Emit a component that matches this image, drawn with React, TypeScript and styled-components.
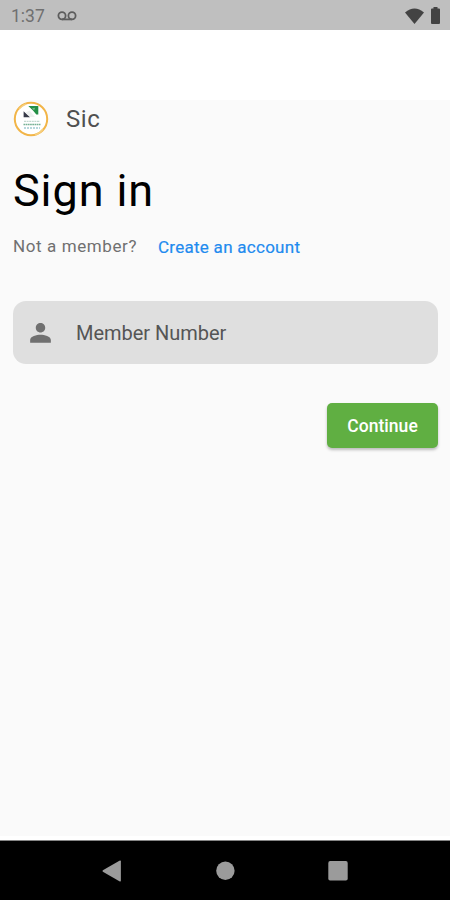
import React from "react";
import styled, { createGlobalStyle } from "styled-components";

const GlobalStyle = createGlobalStyle`
  * { box-sizing: border-box; }
  body { margin: 0; background: #fff; font-family: Roboto, sans-serif; }
`;

const Screen = styled.div`
  display: flex;
  flex-direction: column;
  width: 450px;
  height: 900px;
  background: #fff;
  overflow: hidden;
`;

const StatusBar = styled.header`
  display: flex;
  align-items: center;
  height: 30px;
  padding: 1px 10px 0 11px;
  background: #bfbfbf;
  color: #707070;
`;

const Clock = styled.span`
  width: 46px;
  padding-top: 1px;
  font-size: 17.5px;
  line-height: 28px;
`;

const StatusIcons = styled.div`
  display: flex;
  align-items: center;
  gap: 7px;
  margin-left: auto;
`;

const Page = styled.main`
  display: flex;
  flex-direction: column;
  height: 736px;
  margin-top: 70px;
  padding: 0 12px 0 13px;
  background: #fafafa;
`;

const Brand = styled.div`
  display: flex;
  align-items: center;
  gap: 17px;
  height: 38px;
`;

const BrandName = styled.span`
  font-size: 24px;
  line-height: 28px;
  letter-spacing: 0.6px;
  color: #505050;
`;

const Title = styled.h1`
  margin: 24px 0 0;
  font-size: 45px;
  line-height: 58px;
  font-weight: 400;
  letter-spacing: 0.9px;
  color: #000;
`;

const Prompt = styled.div`
  display: flex;
  gap: 21px;
  margin-top: 16px;
  font-size: 17px;
  line-height: 21px;
`;

const PromptText = styled.span`
  width: 124px;
  letter-spacing: 0.6px;
  white-space: nowrap;
  color: #707070;
`;

const PromptLink = styled.a`
  padding-top: 1px;
  letter-spacing: 0.27px;
  color: #1f8bef;
  -webkit-text-stroke: 0.2px #1f8bef;
`;

const Field = styled.label`
  display: flex;
  align-items: center;
  gap: 22px;
  height: 63px;
  margin-top: 43px;
  padding: 0 14px;
  border-radius: 13px;
  background: #dfdfdf;
`;

const FieldLabel = styled.span`
  font-size: 20px;
  line-height: 24px;
  letter-spacing: -0.02px;
  color: #555;
`;

const ContinueButton = styled.button`
  align-self: flex-end;
  width: 111px;
  height: 45px;
  margin-top: 39px;
  padding: 0;
  border: 0;
  border-radius: 5px;
  background: #60af42;
  box-shadow: 0 2px 3px rgba(0, 0, 0, 0.25);
  color: #fff;
  font: 500 17.5px/47px Roboto, sans-serif;
  letter-spacing: 0.05px;
`;

const NavBar = styled.nav`
  display: grid;
  grid-template-columns: repeat(3, 113px);
  justify-content: center;
  justify-items: center;
  align-items: center;
  height: 60px;
  margin-top: auto;
  border-top: 1px solid #858585;
  background: #000;
`;

const Voicemail = () => (
  <svg width="20" height="12" viewBox="0 0 20 12" fill="none" stroke="#5d5d5d" strokeWidth="1.8">
    <circle cx="5" cy="5.8" r="3.6" />
    <circle cx="15" cy="5.8" r="3.6" />
    <path d="M5 9.4h10" />
  </svg>
);

const Wifi = () => (
  <svg width="19" height="16" viewBox="0 0 19 16" fill="#434343">
    <path d="M0 4.4Q9.5-3.4 19 4.4L9.5 16Z" />
  </svg>
);

const Battery = () => (
  <svg width="9" height="17" viewBox="0 0 9 17" fill="#434343">
    <path d="M2.5 0h4v1.6H8q1 0 1 1V16q0 1-1 1H1q-1 0-1-1V2.6q0-1 1-1h1.5Z" />
  </svg>
);

const Logo = () => (
  <svg width="36" height="36" viewBox="0 0 36 36">
    <circle cx="18" cy="18" r="16.2" fill="#fff" stroke="#f2b548" strokeWidth="2" />
    <path d="M6 8a16 16 0 0 1 7-5M30 28a16 16 0 0 1-8 6" fill="none" stroke="#f6cf7e" strokeWidth="1.5" />
    <path d="M15.3 5h10v8.5h-2L20 9.5Z" fill="#249047" />
    <path d="m19 7.5 3-.8-.8 2.5Z" fill="#83bd95" />
    <path d="M10.6 10.2 17 16.2h-6.4Z" fill="#373a48" />
    <path d="m16.5 9.5 5.5 6.5h-4.5l-4.8-4.5Z" fill="#edf0ef" />
    <path d="M11 20.3h16" stroke="#b3cfc4" strokeWidth="1" strokeDasharray="2 .6" />
    <path d="M10.5 23.5h17" stroke="#76b194" strokeWidth="1.4" strokeDasharray="1.7 .5" />
    <path d="M11 27h16" stroke="#a0cad1" strokeWidth="1.4" strokeDasharray="2 1" />
  </svg>
);

const Person = () => (
  <svg width="27" height="27" viewBox="0 0 24 24" fill="#707070">
    <path d="M12 12c2.2 0 4.2-1.8 4.2-4.2S14.2 3.6 12 3.6 7.8 5.4 7.8 7.8 9.8 12 12 12Zm0 2c-3.4 0-9.2 1.4-9.2 4.6V21h18.4v-2.4c0-3.2-5.8-4.6-9.2-4.6Z" />
  </svg>
);

const Back = () => (
  <svg width="20" height="22" viewBox="0 0 20 22" fill="#9b9b9b">
    <path d="M1.3 10.1 17.4.7q1.5-.8 1.5.8v19q0 1.6-1.5.8L1.3 12.1q-1.6-1 0-2Z" />
  </svg>
);

const Home = () => (
  <svg width="20" height="20" viewBox="0 0 20 20">
    <circle cx="10.4" cy="9.8" r="9.2" fill="#9b9b9b" />
  </svg>
);

const Recents = () => (
  <svg width="20" height="20" viewBox="0 0 20 20">
    <rect x=".3" y=".1" width="19.4" height="19.4" rx="1.8" fill="#9b9b9b" />
  </svg>
);

export default function App() {
  return (
    <Screen>
      <GlobalStyle />
      <StatusBar>
        <Clock>1:37</Clock>
        <Voicemail />
        <StatusIcons>
          <Wifi />
          <Battery />
        </StatusIcons>
      </StatusBar>
      <Page>
        <Brand>
          <Logo />
          <BrandName>Sic</BrandName>
        </Brand>
        <Title>Sign in</Title>
        <Prompt>
          <PromptText>Not a member?</PromptText>
          <PromptLink>Create an account</PromptLink>
        </Prompt>
        <Field>
          <Person />
          <FieldLabel>Member Number</FieldLabel>
        </Field>
        <ContinueButton>Continue</ContinueButton>
      </Page>
      <NavBar>
        <Back />
        <Home />
        <Recents />
      </NavBar>
    </Screen>
  );
}
